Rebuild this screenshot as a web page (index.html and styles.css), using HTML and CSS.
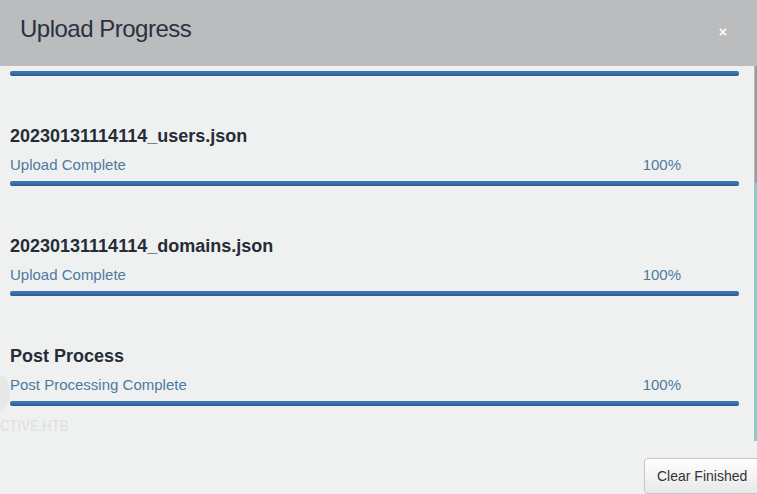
FILE: index.html
```html
<!DOCTYPE html>
<html>
<head>
<meta charset="utf-8">
<link rel="stylesheet" href="styles.css">
</head>
<body>
<div class="modal">
  <div class="modal-header">
    <h1 class="title">Upload Progress</h1>
    <span class="close">×</span>
  </div>
  <div class="modal-main">
    <div class="list">
      <div class="bar bar-first"></div>
      <div class="item">
        <div class="name">20230131114114_users.json</div>
        <div class="status"><span>Upload Complete</span><span class="pct">100%</span></div>
        <div class="bar"></div>
      </div>
      <div class="item">
        <div class="name">20230131114114_domains.json</div>
        <div class="status"><span>Upload Complete</span><span class="pct">100%</span></div>
        <div class="bar"></div>
      </div>
      <div class="item">
        <div class="name">Post Process</div>
        <div class="status"><span>Post Processing Complete</span><span class="pct">100%</span></div>
        <div class="bar"></div>
      </div>
    </div>
    <div class="edge">
      <div class="edge-top"></div>
      <div class="edge-bottom"></div>
    </div>
    <div class="ghost-circle"></div>
    <div class="ghost-text">CTIVE.HTB</div>
  </div>
  <div class="modal-footer">
    <button class="btn">Clear Finished</button>
  </div>
</div>
</body>
</html>
```

FILE: styles.css
```css
html, body {
  margin: 0;
  padding: 0;
  width: 757px;
  height: 494px;
  overflow: hidden;
  background: #eff1f0;
  font-family: "Liberation Sans", Arial, sans-serif;
}

.modal {
  display: flex;
  flex-direction: column;
  height: 494px;
}

.modal-header {
  height: 66px;
  box-sizing: border-box;
  background: #bbbcbe;
  display: flex;
  align-items: flex-start;
  justify-content: space-between;
  padding: 16px 30px 0 20px;
}

.title {
  margin: 0;
  font-size: 24px;
  line-height: 26px;
  font-weight: 400;
  letter-spacing: -0.5px;
  color: #2a3140;
}

.close {
  color: #ffffff;
  font-size: 14px;
  font-weight: bold;
  line-height: 14px;
  margin-top: 9px;
}

.modal-main {
  position: relative;
  height: 377px;
  display: flex;
  overflow: hidden;
}

.list {
  flex: 1;
  padding: 0 15px 0 10px;
}

.bar {
  height: 5px;
  border-radius: 2px;
  background: linear-gradient(#3c7ab2, #3570a6 60%, #2a5886);
}

.bar-first {
  margin-top: 5px;
}

.item {
  margin-top: 50px;
}

.name {
  font-size: 18px;
  line-height: 20px;
  font-weight: bold;
  color: #242c37;
}

.status {
  margin-top: 9px;
  display: flex;
  justify-content: space-between;
  font-size: 15px;
  line-height: 20px;
  color: #4d7a9f;
}

.pct {
  margin-right: 58px;
}

.status + .bar {
  margin-top: 6px;
}

.edge {
  width: 3px;
  display: flex;
  flex-direction: column;
}

.edge-top {
  height: 117px;
  background: #9a9ca0;
  border-left: 1px solid #b5b7ba;
  box-sizing: border-box;
}

.edge-bottom {
  flex: 1;
  background: #8dc8ca;
}

.ghost-circle {
  position: absolute;
  left: -14px;
  top: 308px;
  width: 24px;
  height: 38px;
  border-radius: 50%;
  background: #e6e9e7;
}

.ghost-text {
  position: absolute;
  left: 0;
  top: 352px;
  font-family: Roboto, "Liberation Sans", sans-serif;
  font-size: 14px;
  line-height: 16px;
  color: #dde0df;
}

.modal-footer {
  flex: 1;
  display: flex;
  justify-content: flex-end;
  align-items: flex-start;
  padding-top: 17px;
  margin-right: -4px;
}

.btn {
  font-family: "Liberation Sans", Arial, sans-serif;
  font-size: 14px;
  line-height: 18px;
  color: #333333;
  padding: 8px 12px;
  background: linear-gradient(#ffffff, #e8e8e8);
  border: 1px solid #c4c4c4;
  border-radius: 4px;
  width: 117px;
  text-align: left;
}
```
